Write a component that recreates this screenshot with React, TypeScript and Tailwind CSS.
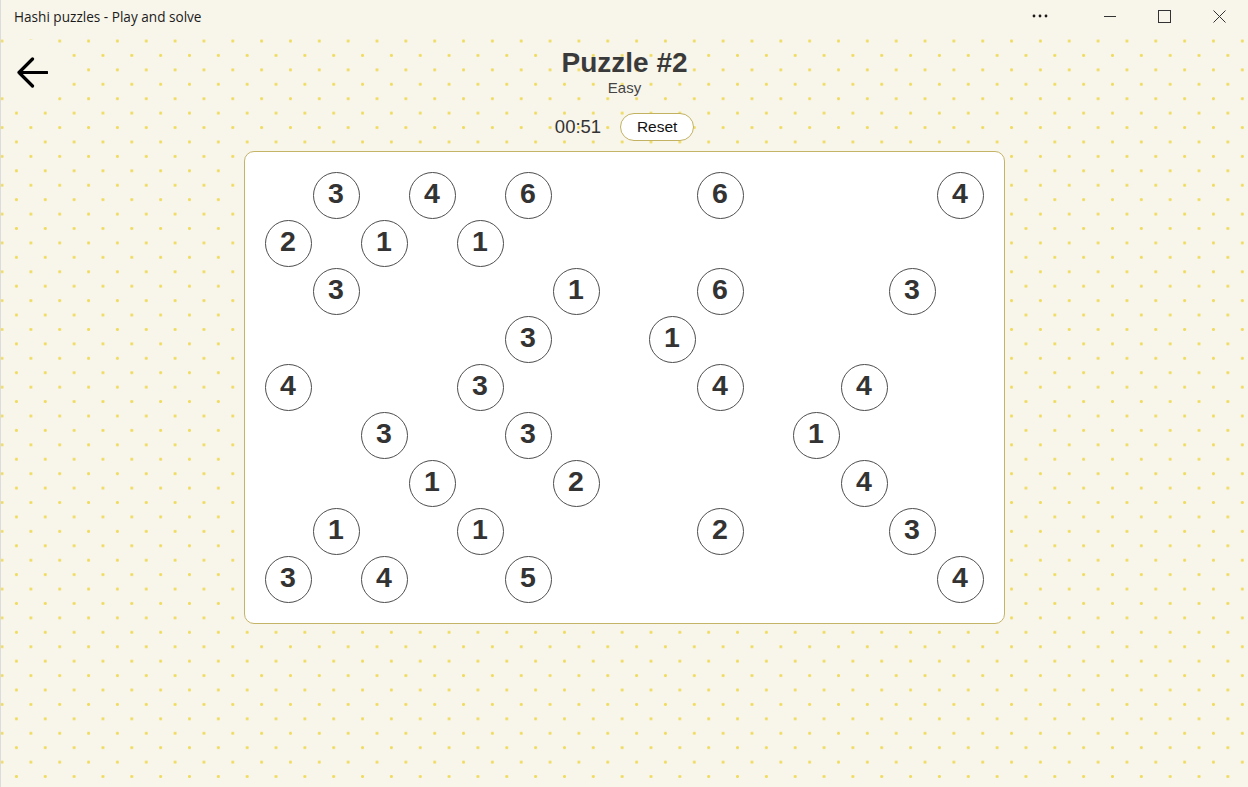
const ISLANDS: Record<string, number> = {
  '0,1': 3, '0,3': 4, '0,5': 6, '0,9': 6, '0,14': 4,
  '1,0': 2, '1,2': 1, '1,4': 1,
  '2,1': 3, '2,6': 1, '2,9': 6, '2,13': 3,
  '3,5': 3, '3,8': 1,
  '4,0': 4, '4,4': 3, '4,9': 4, '4,12': 4,
  '5,2': 3, '5,5': 3, '5,11': 1,
  '6,3': 1, '6,6': 2, '6,12': 4,
  '7,1': 1, '7,4': 1, '7,9': 2, '7,13': 3,
  '8,0': 3, '8,2': 4, '8,5': 5, '8,14': 4,
};

const ROWS = 9;
const COLS = 15;

function TitleBar() {
  return (
    <div className="flex h-[32px] shrink-0 items-center justify-between bg-[#f8f5ea]">
      <span className="pl-[13px] pt-[3px] font-['Open_Sans',sans-serif] text-[13.6px] text-[#1b1b1b]">
        Hashi puzzles - Play and solve
      </span>
      <div className="flex h-full items-center">
        <button className="flex h-full w-[56px] items-center justify-center">
          <svg width="16" height="4" viewBox="0 0 16 4">
            <circle cx="2" cy="2" r="1.4" fill="#1b1b1b" />
            <circle cx="8" cy="2" r="1.4" fill="#1b1b1b" />
            <circle cx="14" cy="2" r="1.4" fill="#1b1b1b" />
          </svg>
        </button>
        <button className="ml-[14px] flex h-full w-[55px] items-center justify-center">
          <svg width="12" height="12" viewBox="0 0 12 12">
            <line x1="0" y1="6.5" x2="12" y2="6.5" stroke="#333" strokeWidth="1" />
          </svg>
        </button>
        <button className="flex h-full w-[55px] items-center justify-center">
          <svg width="13" height="13" viewBox="0 0 13 13">
            <rect x="0.5" y="0.5" width="12" height="12" fill="none" stroke="#333" strokeWidth="1" />
          </svg>
        </button>
        <button className="mr-[1px] flex h-full w-[55px] items-center justify-center">
          <svg width="13" height="13" viewBox="0 0 13 13">
            <path d="M0.5 0.5 12.5 12.5 M12.5 0.5 0.5 12.5" stroke="#333" strokeWidth="1" />
          </svg>
        </button>
      </div>
    </div>
  );
}

function Island({ value }: { value: number }) {
  return (
    <div className="flex h-[47px] w-[47px] items-center justify-center rounded-full border-[1.5px] border-[#4d4d4d] bg-white pb-[3px] text-[28.5px] font-bold leading-none text-[#333]">
      {value}
    </div>
  );
}

export default function App() {
  return (
    <div className="flex h-[787px] w-[1248px] flex-col overflow-hidden border-l border-[#dcdcdc] bg-[#f8f5ea] font-['Liberation_Sans',Arial,sans-serif]">
      <TitleBar />
      <main className="flex-1 bg-[radial-gradient(circle,#efdb5c_1.1px,transparent_1.9px),radial-gradient(circle,#efdb5c_1.1px,transparent_1.9px)] bg-[length:28.85px_28.85px] bg-[position:-13.4px_-5.4px,1px_9px]">
        <div className="grid grid-cols-[1fr_auto_1fr] pt-[8px]">
          <div>
            <button className="flex h-[64px] w-[64px] items-center justify-center rounded-[22px] bg-[#f8f5ea]">
              <svg width="32" height="32" viewBox="0 0 32 32" className="mr-[2px]">
                <path
                  d="M16.5 3 3 16.5 16.5 30 M3 16.5H31"
                  fill="none"
                  stroke="#000"
                  strokeWidth="3.2"
                  strokeLinecap="round"
                  strokeLinejoin="round"
                />
              </svg>
            </button>
          </div>
          <div className="flex flex-col items-center pt-[6px]">
            <h1 className="text-[28px] font-bold leading-[33px] text-[#3a3a3a]">Puzzle #2</h1>
            <p className="text-[15px] leading-[17px] text-[#444]">Easy</p>
          </div>
          <div />
        </div>

        <div className="flex flex-col items-center">
          <div className="mt-[9px] flex items-center gap-[19px]">
            <span className="text-[18.5px] text-[#333]">00:51</span>
            <button className="flex h-[28px] w-[74px] items-center justify-center rounded-full border border-[#c3b262] bg-white text-[15.5px] text-[#111]">
              Reset
            </button>
          </div>

          <div className="mt-[10px] h-[473px] w-[761px] rounded-[10px] border-[1.5px] border-[#c4b468] bg-white p-[19px]">
            <div className="grid grid-cols-[repeat(15,48px)] grid-rows-[repeat(9,48px)]">
              {Array.from({ length: ROWS }).map((_, r) =>
                Array.from({ length: COLS }).map((_, c) => {
                  const value = ISLANDS[`${r},${c}`];
                  return (
                    <div key={`${r}-${c}`} className="flex items-center justify-center">
                      {value !== undefined && <Island value={value} />}
                    </div>
                  );
                })
              )}
            </div>
          </div>
        </div>
      </main>
    </div>
  );
}
